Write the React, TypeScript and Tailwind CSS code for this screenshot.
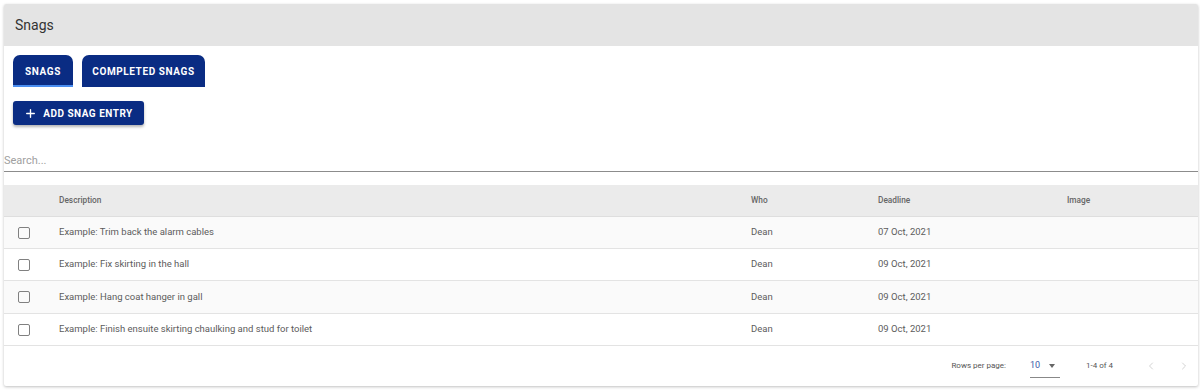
import { ChevronLeft, ChevronRight, Plus } from 'lucide-react';

const rows = [
  { desc: 'Example: Trim back the alarm cables', who: 'Dean', deadline: '07 Oct, 2021', h: 'h-[32px]' },
  { desc: 'Example: Fix skirting in the hall', who: 'Dean', deadline: '09 Oct, 2021', h: 'h-[32px]' },
  { desc: 'Example: Hang coat hanger in gall', who: 'Dean', deadline: '09 Oct, 2021', h: 'h-[33px]' },
  { desc: 'Example: Finish ensuite skirting chaulking and stud for toilet', who: 'Dean', deadline: '09 Oct, 2021', h: 'h-[32px]' },
];

const cols = 'grid grid-cols-[55px_692px_127px_189px_1fr] items-center';

export default function App() {
  return (
    <div className="bg-white h-[390px] pt-[4px] pl-[4px] pr-[2px] font-['Roboto',sans-serif]">
      <div className="bg-white shadow-[0_1px_3px_rgba(0,0,0,0.25)] rounded-[2px] overflow-hidden">
        {/* Header */}
        <div className="h-[42px] bg-[#e4e4e4] flex items-center pl-[11px] text-[14px] text-[#333]">
          Snags
        </div>

        {/* Tabs */}
        <div className="flex gap-[9px] pl-[9px] mt-[9px]">
          <div className="relative w-[60px] h-[32px] bg-[#0a2c83] rounded-t-[7px] flex items-center justify-center text-white text-[10px] font-bold tracking-[0.6px]">
            SNAGS
            <div className="absolute bottom-0 left-0 right-0 h-[2px] bg-[#4a8ef0]" />
          </div>
          <div className="w-[123px] h-[32px] bg-[#0a2c83] rounded-t-[7px] flex items-center justify-center text-white text-[10px] font-bold tracking-[0.6px]">
            COMPLETED SNAGS
          </div>
        </div>

        {/* Add button */}
        <div className="pl-[9px] mt-[14px]">
          <button className="w-[131px] h-[24px] bg-[#0a2c83] rounded-[3px] shadow-[0_2px_3px_rgba(0,0,0,0.3)] flex items-center justify-center gap-[6px] text-white text-[10px] font-bold tracking-[0.5px]">
            <Plus size={13} strokeWidth={2.5} />
            ADD SNAG ENTRY
          </button>
        </div>

        {/* Search */}
        <div className="mt-[26px] h-[21px] border-b border-[#8c8c8c] flex items-center text-[11px] text-[#a0a0a0]">
          Search...
        </div>

        {/* Table */}
        <div className="mt-[13px]">
          <div className={`${cols} h-[32px] bg-[#ebebeb] border-b border-[#dedede] text-[8.3px] text-[#666] font-medium`}>
            <div />
            <div>Description</div>
            <div>Who</div>
            <div>Deadline</div>
            <div>Image</div>
          </div>
          {rows.map((r, i) => (
            <div
              key={i}
              className={`${cols} ${r.h} border-b border-[#e3e3e3] text-[9.5px] text-[#5c5c5c] ${i % 2 === 0 ? 'bg-[#fafafa]' : 'bg-white'}`}
            >
              <div className="pl-[14px]">
                <div className="w-[12px] h-[12px] border-[1.5px] border-[#808080] rounded-[2px]" />
              </div>
              <div>{r.desc}</div>
              <div>{r.who}</div>
              <div>{r.deadline}</div>
              <div />
            </div>
          ))}
        </div>

        {/* Footer */}
        <div className="h-[40px] flex items-center justify-end text-[8px] text-[#555]">
          <span>Rows per page:</span>
          <div className="ml-[24px] w-[30px] h-[20px] border-b border-[#888] flex items-center justify-between text-[#3b5aa8] text-[9px] mt-[4px]">
            <span className="-mt-[4px]">10</span>
            <span className="-mt-[4px] mr-[5px] w-0 h-0 border-l-[3.5px] border-r-[3.5px] border-t-[4px] border-l-transparent border-r-transparent border-t-[#666]" />
          </div>
          <span className="ml-[26px]">1-4 of 4</span>
          <ChevronLeft size={12} strokeWidth={1.5} className="ml-[32px] text-[#c4c4c4]" />
          <ChevronRight size={12} strokeWidth={1.5} className="ml-[21px] mr-[8px] text-[#c4c4c4]" />
        </div>
      </div>
    </div>
  );
}
